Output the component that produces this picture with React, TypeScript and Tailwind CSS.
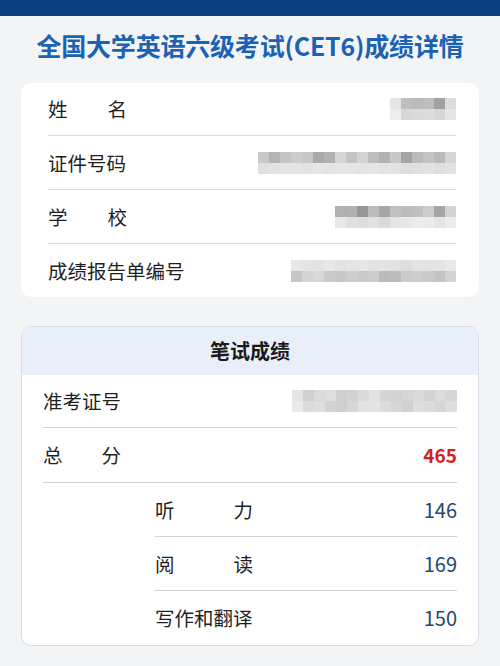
import React from "react";

const FONT = '"Noto Sans CJK SC", "Noto Sans", sans-serif';

// blurred value: two rows of grey blocks, like a pixelated screenshot
function Mosaic({ top, bottom, cell = 11 }: { top: number[]; bottom: number[]; cell?: number }) {
  const cols = Math.max(top.length, bottom.length);
  const w = cols * cell;
  const tone = (v: number) => `rgb(${v},${v},${v})`;
  return (
    <svg width={w} height={cell * 2} viewBox={`0 0 ${w} ${cell * 2}`} className="block">
      {top.map((v, i) => (
        <rect key={"t" + i} x={w - (top.length - i) * cell} y={0} width={cell} height={cell} fill={tone(v)} />
      ))}
      {bottom.map((v, i) => (
        <rect key={"b" + i} x={w - (bottom.length - i) * cell} y={cell} width={cell} height={cell} fill={tone(v)} />
      ))}
    </svg>
  );
}

function Label({ chars, width }: { chars: string[]; width: string }) {
  return (
    <div className={`flex justify-between ${width}`}>
      {chars.map((c, i) => (
        <span key={i}>{c}</span>
      ))}
    </div>
  );
}

export default function App() {
  return (
    <div className="w-[500px] h-[666px] bg-[#f3f4f5] overflow-hidden text-[#1f1f1f]" style={{ fontFamily: FONT }}>
      <div className="h-[16px] bg-[#0c3f7f]" />

      <h1 className="mt-[12px] text-center text-[25px] leading-[34px] font-bold text-[#1b62b5] tracking-[-0.2px]">
        全国大学英语六级考试(CET6)成绩详情
      </h1>

      {/* personal info */}
      <div className="mx-[21px] mt-[21px] bg-white rounded-[10px] pl-[27px] pr-[23px] text-[19.5px]">
        <div className="h-[53px] flex items-center justify-between border-b border-[#d9d9d9]">
          <Label chars={["姓", "名"]} width="w-[79px]" />
          <Mosaic top={[228, 190, 186, 190, 160, 220]} bottom={[236, 216, 218, 220, 214, 230]} />
        </div>
        <div className="h-[54px] flex items-center justify-between border-b border-[#d9d9d9]">
          <span>证件号码</span>
          <Mosaic
            top={[200, 180, 196, 204, 200, 170, 178, 214, 196, 212, 190, 178, 200, 165, 186, 196, 186, 214]}
            bottom={[224, 226, 228, 228, 226, 230, 228, 230, 230, 228, 230, 228, 226, 222, 224, 226, 222, 226]}
          />
        </div>
        <div className="h-[54px] flex items-center justify-between border-b border-[#d9d9d9]">
          <Label chars={["学", "校"]} width="w-[79px]" />
          <Mosaic
            top={[176, 178, 150, 188, 166, 192, 188, 192, 204, 166, 210]}
            bottom={[232, 224, 222, 226, 218, 228, 232, 236, 234, 228, 236]}
          />
        </div>
        <div className="h-[53px] flex items-center justify-between">
          <span>成绩报告单编号</span>
          <Mosaic
            top={[232, 228, 226, 232, 226, 228, 230, 226, 228, 226, 222, 228, 226, 228, 232]}
            bottom={[198, 212, 216, 202, 200, 206, 202, 204, 186, 188, 204, 206, 202, 196, 210]}
          />
        </div>
      </div>

      {/* written exam */}
      <div className="mx-[21px] mt-[29px] bg-white rounded-[10px] border border-[#d4deea] overflow-hidden text-[19.5px]">
        <div className="h-[48px] bg-[#e8eff9] flex items-center justify-center text-[20px] font-bold text-[#1a1a1a]">
          笔试成绩
        </div>
        <div className="px-[21px]">
          <div className="h-[53px] flex items-center justify-between border-b border-[#d3d3d3]">
            <span>准考证号</span>
            <Mosaic
              top={[228, 208, 218, 222, 206, 210, 218, 226, 212, 210, 214, 218, 210, 220, 214]}
              bottom={[234, 220, 222, 210, 206, 214, 226, 228, 220, 214, 208, 222, 220, 214, 222]}
            />
          </div>
          <div className="h-[55px] flex items-center justify-between border-b border-[#d3d3d3]">
            <Label chars={["总", "分"]} width="w-[78px]" />
            <span className="font-bold text-[#d21f1f] text-[19px]">465</span>
          </div>
          <div className="pl-[112px]">
            <div className="h-[54px] flex items-center justify-between border-b border-[#d3d3d3]">
              <Label chars={["听", "力"]} width="w-[98px]" />
              <span className="text-[#234774] text-[20px]">146</span>
            </div>
            <div className="h-[54px] flex items-center justify-between border-b border-[#d3d3d3]">
              <Label chars={["阅", "读"]} width="w-[98px]" />
              <span className="text-[#234774] text-[20px]">169</span>
            </div>
            <div className="h-[54px] flex items-center justify-between">
              <span>写作和翻译</span>
              <span className="text-[#234774] text-[20px]">150</span>
            </div>
          </div>
        </div>
      </div>
    </div>
  );
}
